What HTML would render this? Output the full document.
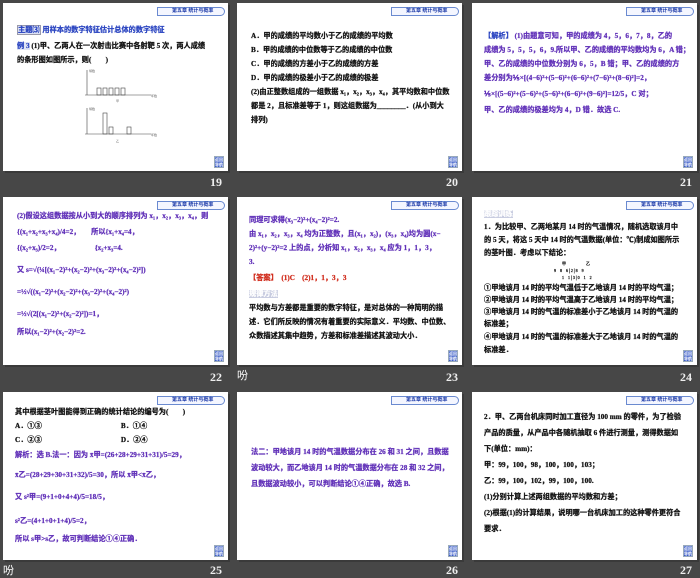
<!DOCTYPE html>
<html><head><meta charset="utf-8"><style>
*{margin:0;padding:0;box-sizing:border-box}
body{width:700px;height:578px;background:#474747;position:relative;overflow:hidden;font-family:"Liberation Serif","Noto Serif CJK SC","Noto Sans CJK SC",serif;}
.s{position:absolute;width:225px;height:168px;background:#fff;box-shadow:2px 2px 0 #3a3a3a}
.tag{position:absolute;right:3px;top:4px;width:68px;height:9px;border:1px solid #6a8ad0;border-radius:0 5px 5px 0;background:#f4f6ff;font:bold 5px "Liberation Sans","Noto Sans CJK SC",sans-serif;color:#1c3aa8;padding-left:14px;line-height:7px;white-space:nowrap}
.ic{position:absolute;right:4px;bottom:3px;width:10px;height:12px;background:#3a5cc8;border:1px solid #9ab;color:#fff;font:bold 4px sans-serif;line-height:5px;text-align:center}
.n{position:absolute;color:#eee;font:bold 12px "Liberation Serif",serif;width:40px;text-align:right}
.t{position:absolute;left:12px;font-size:7.2px;line-height:14px;color:#111;font-weight:bold;white-space:nowrap;font-family:"Liberation Serif","Noto Sans CJK SC",sans-serif;-webkit-text-stroke:0.25px currentColor}
.p{color:#6030b8}
.r{color:#d02a1a}
.b{color:#2a44c0}
.hz{position:absolute;color:#fff;font:11px "Noto Sans CJK SC",sans-serif}
</style></head><body>

<!-- 19 -->
<div class="s" style="left:3px;top:3px">
<div class="tag">第五章 统计与概率</div>
<div class="t" style="top:20px;left:14px"><span style="background:#dfe4f4;color:#2a44c0;border:1px solid #99a">主题⑶</span> <span class="b">用样本的数字特征估计总体的数字特征</span></div>
<div class="t" style="top:36px;left:14px"><span style="background:#dfe4f4;color:#2a44c0">例 3</span>  (1)甲、乙两人在一次射击比赛中各射靶 5 次，两人成绩</div>
<div class="t" style="top:50px;left:14px">的条形图如图所示，则(　　)</div>
<svg style="position:absolute;left:78px;top:65px" width="76" height="78" viewBox="0 0 76 78">
<g stroke="#444" stroke-width=".6" fill="none">
<line x1="6" y1="2" x2="6" y2="27"/><line x1="4" y1="27" x2="70" y2="27"/>
<rect x="16" y="20" width="4" height="7"/><rect x="22" y="20" width="4" height="7"/><rect x="28" y="20" width="4" height="7"/><rect x="34" y="20" width="4" height="7"/><rect x="40" y="20" width="4" height="7"/>
<line x1="6" y1="40" x2="6" y2="66"/><line x1="4" y1="66" x2="70" y2="66"/>
<rect x="22" y="45" width="4" height="21"/><rect x="28" y="59" width="4" height="7"/><rect x="46" y="59" width="4" height="7"/>
</g>
<g font-size="3" fill="#333"><text x="8" y="4">频数</text><text x="70" y="29">环数</text><text x="35" y="34">甲</text><text x="8" y="42">频数</text><text x="70" y="68">环数</text><text x="35" y="74">乙</text></g>
</svg>
<div class="ic">返回<br>导航</div>
</div>
<div class="n" style="left:182px;top:175px">19</div>

<!-- 20 -->
<div class="s" style="left:237px;top:3px">
<div class="tag">第五章 统计与概率</div>
<div class="t" style="top:26px;left:14px">A．甲的成绩的平均数小于乙的成绩的平均数</div>
<div class="t" style="top:40px;left:14px">B．甲的成绩的中位数等于乙的成绩的中位数</div>
<div class="t" style="top:54px;left:14px">C．甲的成绩的方差小于乙的成绩的方差</div>
<div class="t" style="top:68px;left:14px">D．甲的成绩的极差小于乙的成绩的极差</div>
<div class="t" style="top:82px;left:14px">(2)由正整数组成的一组数据 x₁，x₂，x₃，x₄，其平均数和中位数</div>
<div class="t" style="top:96px;left:14px">都是 2，且标准差等于 1，则这组数据为________．(从小到大</div>
<div class="t" style="top:110px;left:14px">排列)</div>
<div class="ic">返回<br>导航</div>
</div>
<div class="n" style="left:418px;top:175px">20</div>

<!-- 21 -->
<div class="s" style="left:472px;top:3px">
<div class="tag">第五章 统计与概率</div>
<div class="t p" style="top:26px;left:12px"><span class="b">【解析】</span>  (1)由题意可知，甲的成绩为 4，5，6，7，8，乙的</div>
<div class="t p" style="top:40px;left:12px">成绩为 5，5，5，6，9.所以甲、乙的成绩的平均数均为 6，A 错；</div>
<div class="t p" style="top:54px;left:12px">甲、乙的成绩的中位数分别为 6，5，B 错；甲、乙的成绩的方</div>
<div class="t p" style="top:68px;left:12px">差分别为⅕×[(4−6)²+(5−6)²+(6−6)²+(7−6)²+(8−6)²]=2，</div>
<div class="t p" style="top:84px;left:12px">⅕×[(5−6)²+(5−6)²+(5−6)²+(6−6)²+(9−6)²]=12/5，C 对；</div>
<div class="t p" style="top:100px;left:12px">甲、乙的成绩的极差均为 4，D 错．故选 C.</div>
<div class="ic">返回<br>导航</div>
</div>
<div class="n" style="left:652px;top:175px">21</div>

<!-- 22 -->
<div class="s" style="left:3px;top:197px">
<div class="tag">第五章 统计与概率</div>
<div class="t p" style="top:12px;left:14px">(2)假设这组数据按从小到大的顺序排列为 x₁，x₂，x₃，x₄，则</div>
<div class="t p" style="top:28px;left:14px">{(x₁+x₂+x₃+x₄)/4=2，　　所以{x₁+x₄=4，</div>
<div class="t p" style="top:44px;left:14px">{(x₂+x₃)/2=2，　　　　　 {x₂+x₃=4.</div>
<div class="t p" style="top:66px;left:14px">又 s=√(¼[(x₁−2)²+(x₂−2)²+(x₃−2)²+(x₄−2)²])</div>
<div class="t p" style="top:88px;left:14px">=½√((x₁−2)²+(x₂−2)²+(x₃−2)²+(x₄−2)²)</div>
<div class="t p" style="top:110px;left:14px">=½√(2[(x₁−2)²+(x₂−2)²])=1，</div>
<div class="t p" style="top:128px;left:14px">所以(x₁−2)²+(x₂−2)²=2.</div>
<div class="ic">返回<br>导航</div>
</div>
<div class="n" style="left:182px;top:370px">22</div>

<!-- 23 -->
<div class="s" style="left:237px;top:197px">
<div class="tag">第五章 统计与概率</div>
<div class="t p" style="top:16px;left:12px">同理可求得(x₃−2)²+(x₄−2)²=2.</div>
<div class="t p" style="top:30px;left:12px">由 x₁，x₂，x₃，x₄ 均为正整数，且(x₁，x₂)，(x₃，x₄)均为圆(x−</div>
<div class="t p" style="top:44px;left:12px">2)²+(y−2)²=2 上的点，分析知 x₁，x₂，x₃，x₄ 应为 1，1，3，</div>
<div class="t p" style="top:58px;left:12px">3.</div>
<div class="t r" style="top:74px;left:12px">【答案】　(1)C　(2)1，1，3，3</div>
<div class="t" style="top:90px;left:12px"><span style="background:#c8cce0;color:#fff">规律方法</span></div>
<div class="t" style="top:104px;left:12px">平均数与方差都是重要的数字特征，是对总体的一种简明的描</div>
<div class="t" style="top:118px;left:12px">述．它们所反映的情况有着重要的实际意义．平均数、中位数、</div>
<div class="t" style="top:132px;left:12px">众数描述其集中趋势，方差和标准差描述其波动大小．</div>
<div class="ic">返回<br>导航</div>
</div>
<div class="hz" style="left:237px;top:367px">吩</div>
<div class="n" style="left:418px;top:370px">23</div>

<!-- 24 -->
<div class="s" style="left:472px;top:197px">
<div class="tag">第五章 统计与概率</div>
<div class="t" style="top:12px;left:12px;line-height:10px"><span style="background:#c8cce0;color:#fff">跟踪训练</span></div>
<div class="t" style="top:23px;left:12px">1．为比较甲、乙两地某月 14 时的气温情况，随机选取该月中</div>
<div class="t" style="top:36px;left:12px">的 5 天，将这 5 天中 14 时的气温数据(单位：℃)制成如图所示</div>
<div class="t" style="top:49px;left:12px">的茎叶图．考虑以下结论：</div>
<div class="t" style="top:63px;left:82px;font-size:4px;line-height:7px;font-weight:normal">　　甲　　　　　乙<br>9　8　6│2│8　9<br>　　1　1│3│0　1　2</div>
<div class="t" style="top:84px;left:12px">①甲地该月 14 时的平均气温低于乙地该月 14 时的平均气温；</div>
<div class="t" style="top:96px;left:12px">②甲地该月 14 时的平均气温高于乙地该月 14 时的平均气温；</div>
<div class="t" style="top:108px;left:12px">③甲地该月 14 时的气温的标准差小于乙地该月 14 时的气温的</div>
<div class="t" style="top:120px;left:12px">标准差；</div>
<div class="t" style="top:133px;left:12px">④甲地该月 14 时的气温的标准差大于乙地该月 14 时的气温的</div>
<div class="t" style="top:146px;left:12px">标准差．</div>
<div class="ic">返回<br>导航</div>
</div>
<div class="n" style="left:652px;top:370px">24</div>

<!-- 25 -->
<div class="s" style="left:3px;top:392px">
<div class="tag">第五章 统计与概率</div>
<div class="t" style="top:13px;left:12px">其中根据茎叶图能得到正确的统计结论的编号为(　　)</div>
<div class="t" style="top:27px;left:12px">A．①③　　　　　　　　　　　B．①④</div>
<div class="t" style="top:41px;left:12px">C．②③　　　　　　　　　　　D．②④</div>
<div class="t p" style="top:56px;left:12px">解析：选 B.法一：因为 x̄甲=(26+28+29+31+31)/5=29，</div>
<div class="t p" style="top:76px;left:12px">x̄乙=(28+29+30+31+32)/5=30，所以 x̄甲&lt;x̄乙，</div>
<div class="t p" style="top:98px;left:12px">又 s²甲=(9+1+0+4+4)/5=18/5，</div>
<div class="t p" style="top:122px;left:12px">s²乙=(4+1+0+1+4)/5=2，</div>
<div class="t p" style="top:140px;left:12px">所以 s甲&gt;s乙，故可判断结论①④正确．</div>
<div class="ic">返回<br>导航</div>
</div>
<div class="hz" style="left:3px;top:562px">吩</div>
<div class="n" style="left:182px;top:563px">25</div>

<!-- 26 -->
<div class="s" style="left:237px;top:392px">
<div class="tag">第五章 统计与概率</div>
<div class="t p" style="top:53px;left:14px">法二：甲地该月 14 时的气温数据分布在 26 和 31 之间，且数据</div>
<div class="t p" style="top:69px;left:14px">波动较大，而乙地该月 14 时的气温数据分布在 28 和 32 之间，</div>
<div class="t p" style="top:85px;left:14px">且数据波动较小，可以判断结论①④正确，故选 B.</div>
<div class="ic">返回<br>导航</div>
</div>
<div class="n" style="left:418px;top:563px">26</div>

<!-- 27 -->
<div class="s" style="left:472px;top:392px">
<div class="tag">第五章 统计与概率</div>
<div class="t" style="top:18px;left:12px">2．甲、乙两台机床同时加工直径为 100 mm 的零件，为了检验</div>
<div class="t" style="top:34px;left:12px">产品的质量，从产品中各随机抽取 6 件进行测量，测得数据如</div>
<div class="t" style="top:50px;left:12px">下(单位：mm)：</div>
<div class="t" style="top:66px;left:12px">甲：99，100，98，100，100，103；</div>
<div class="t" style="top:82px;left:12px">乙：99，100，102，99，100，100.</div>
<div class="t" style="top:98px;left:12px">(1)分别计算上述两组数据的平均数和方差；</div>
<div class="t" style="top:114px;left:12px">(2)根据(1)的计算结果，说明哪一台机床加工的这种零件更符合</div>
<div class="t" style="top:130px;left:12px">要求．</div>
<div class="ic">返回<br>导航</div>
</div>
<div class="n" style="left:652px;top:563px">27</div>

</body></html>
